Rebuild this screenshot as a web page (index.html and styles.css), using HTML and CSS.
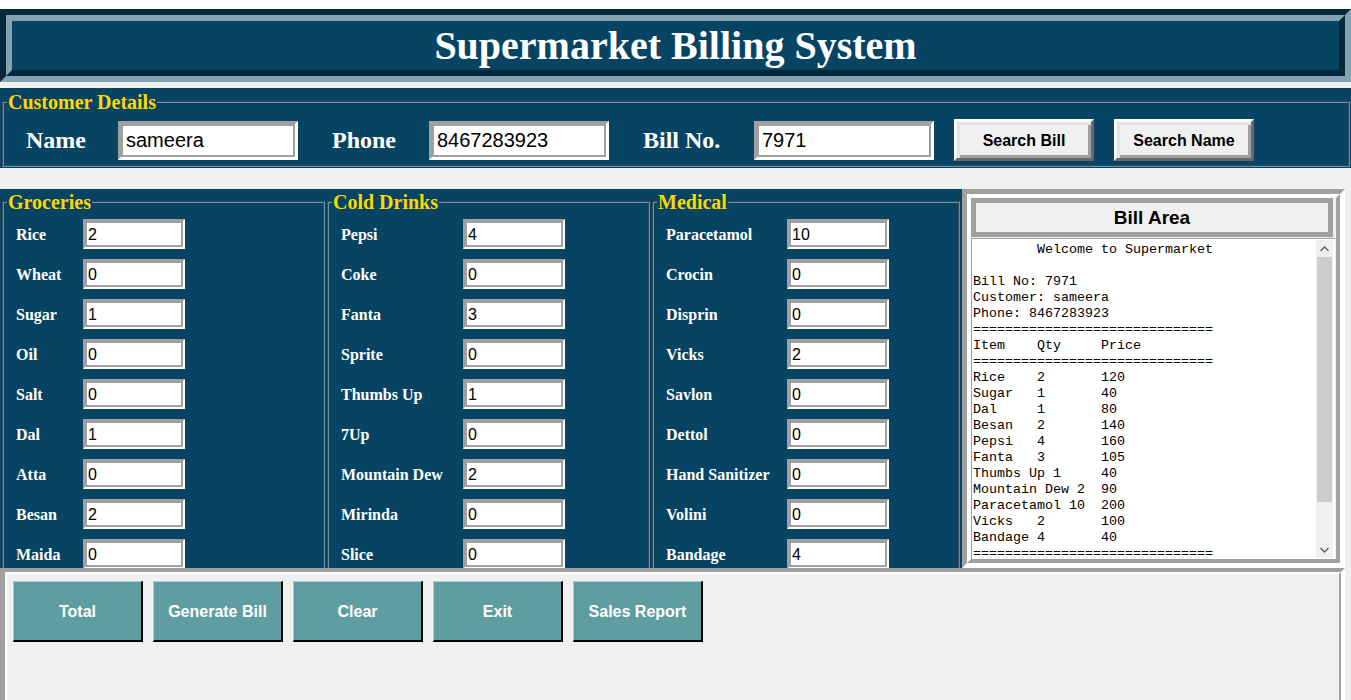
FILE: index.html
```html
<!DOCTYPE html>
<html>
<head>
<meta charset="utf-8">
<title>Supermarket Billing System</title>
<link rel="stylesheet" href="styles.css">
</head>
<body>
<div class="topstrip"></div>
<header class="title">
  <div class="title-inner"><h1>Supermarket Billing System</h1></div>
</header>

<section class="cust">
  <fieldset class="group cust-group">
    <legend>Customer Details</legend>
    <div class="cust-row">
      <span class="clabel w-name">Name</span>
      <span class="centry"><input type="text" value="sameera"></span>
      <span class="clabel w-phone">Phone</span>
      <span class="centry"><input type="text" value="8467283923"></span>
      <span class="clabel w-bill">Bill No.</span>
      <span class="centry"><input type="text" value="7971"></span>
      <button class="sbtn">Search Bill</button>
      <button class="sbtn">Search Name</button>
    </div>
  </fieldset>
</section>

<section class="products">
  <div class="prod-area">
    <fieldset class="group pgroup g1">
      <legend>Groceries</legend>
      <div class="rows">
        <div class="row"><span class="plabel">Rice</span><span class="pentry"><input value="2"></span></div>
        <div class="row"><span class="plabel">Wheat</span><span class="pentry"><input value="0"></span></div>
        <div class="row"><span class="plabel">Sugar</span><span class="pentry"><input value="1"></span></div>
        <div class="row"><span class="plabel">Oil</span><span class="pentry"><input value="0"></span></div>
        <div class="row"><span class="plabel">Salt</span><span class="pentry"><input value="0"></span></div>
        <div class="row"><span class="plabel">Dal</span><span class="pentry"><input value="1"></span></div>
        <div class="row"><span class="plabel">Atta</span><span class="pentry"><input value="0"></span></div>
        <div class="row"><span class="plabel">Besan</span><span class="pentry"><input value="2"></span></div>
        <div class="row"><span class="plabel">Maida</span><span class="pentry"><input value="0"></span></div>
      </div>
    </fieldset>
    <fieldset class="group pgroup g2">
      <legend>Cold Drinks</legend>
      <div class="rows">
        <div class="row"><span class="plabel">Pepsi</span><span class="pentry"><input value="4"></span></div>
        <div class="row"><span class="plabel">Coke</span><span class="pentry"><input value="0"></span></div>
        <div class="row"><span class="plabel">Fanta</span><span class="pentry"><input value="3"></span></div>
        <div class="row"><span class="plabel">Sprite</span><span class="pentry"><input value="0"></span></div>
        <div class="row"><span class="plabel">Thumbs Up</span><span class="pentry"><input value="1"></span></div>
        <div class="row"><span class="plabel">7Up</span><span class="pentry"><input value="0"></span></div>
        <div class="row"><span class="plabel">Mountain Dew</span><span class="pentry"><input value="2"></span></div>
        <div class="row"><span class="plabel">Mirinda</span><span class="pentry"><input value="0"></span></div>
        <div class="row"><span class="plabel">Slice</span><span class="pentry"><input value="0"></span></div>
      </div>
    </fieldset>
    <fieldset class="group pgroup g3">
      <legend>Medical</legend>
      <div class="rows">
        <div class="row"><span class="plabel">Paracetamol</span><span class="pentry"><input value="10"></span></div>
        <div class="row"><span class="plabel">Crocin</span><span class="pentry"><input value="0"></span></div>
        <div class="row"><span class="plabel">Disprin</span><span class="pentry"><input value="0"></span></div>
        <div class="row"><span class="plabel">Vicks</span><span class="pentry"><input value="2"></span></div>
        <div class="row"><span class="plabel">Savlon</span><span class="pentry"><input value="0"></span></div>
        <div class="row"><span class="plabel">Dettol</span><span class="pentry"><input value="0"></span></div>
        <div class="row"><span class="plabel">Hand Sanitizer</span><span class="pentry"><input value="0"></span></div>
        <div class="row"><span class="plabel">Volini</span><span class="pentry"><input value="0"></span></div>
        <div class="row"><span class="plabel">Bandage</span><span class="pentry"><input value="4"></span></div>
      </div>
    </fieldset>
  </div>

  <div class="bill">
    <div class="bill-inner">
      <div class="bill-title">Bill Area</div>
      <div class="bill-text">
<pre class="bill-pre">        Welcome to Supermarket

Bill No: 7971
Customer: sameera
Phone: 8467283923
==============================
Item    Qty     Price
==============================
Rice    2       120
Sugar   1       40
Dal     1       80
Besan   2       140
Pepsi   4       160
Fanta   3       105
Thumbs Up 1     40
Mountain Dew 2  90
Paracetamol 10  200
Vicks   2       100
Bandage 4       40
==============================</pre>
        <div class="scrollbar">
          <div class="sb-arrow"><svg width="9" height="6" viewBox="0 0 9 6"><path d="M0.5 5 L4.5 1 L8.5 5" fill="none" stroke="#606060" stroke-width="1.3"/></svg></div>
          <div class="sb-track"><div class="sb-thumb"></div></div>
          <div class="sb-arrow"><svg width="9" height="6" viewBox="0 0 9 6"><path d="M0.5 1 L4.5 5 L8.5 1" fill="none" stroke="#606060" stroke-width="1.3"/></svg></div>
        </div>
      </div>
    </div>
  </div>
</section>

<section class="actions">
  <div class="actions-inner">
    <button class="abtn">Total</button>
    <button class="abtn">Generate Bill</button>
    <button class="abtn">Clear</button>
    <button class="abtn">Exit</button>
    <button class="abtn">Sales Report</button>
  </div>
</section>
</body>
</html>
```

FILE: styles.css
```css
* { box-sizing: border-box; }

html, body {
  margin: 0;
  padding: 0;
}

body {
  width: 1351px;
  height: 700px;
  overflow: hidden;
  background: #f0f0f0;
  font-family: "Liberation Sans", Arial, sans-serif;
}

.topstrip {
  height: 9px;
  background: #ffffff;
}

/* Title */
.title {
  height: 73px;
  border: 6px solid;
  border-color: #04293b #83a1b1 #83a1b1 #04293b;
}

.title-inner {
  height: 100%;
  border: 6px solid;
  border-color: #83a1b1 #04293b #04293b #83a1b1;
  background: #074463;
  display: flex;
  align-items: center;
  justify-content: center;
}

.title-inner h1 {
  margin: 0;
  font-family: "Liberation Serif", "Times New Roman", serif;
  font-weight: bold;
  font-size: 40px;
  line-height: 48px;
  color: #ffffff;
}

/* Group boxes */
.group {
  margin: 0;
  border: 2px groove #6f93a6;
}

.group legend {
  padding: 0 1px;
  font-family: "Liberation Serif", "Times New Roman", serif;
  font-weight: bold;
  font-size: 20px;
  line-height: 22px;
  color: #ffd700;
}

/* Customer details */
.cust {
  margin-top: 6px;
  height: 80px;
  background: #074463;
  padding: 3px 1px 0 2px;
}

.cust-group {
  padding: 6px 0 4px 3px;
}

.cust-row {
  display: flex;
  align-items: center;
  height: 42px;
  padding-left: 19px;
}

.clabel {
  font-family: "Liberation Serif", "Times New Roman", serif;
  font-weight: bold;
  font-size: 24px;
  color: #ffffff;
  flex: none;
}

.w-name { width: 92px; }
.w-phone { width: 97px; margin-left: 34px; }
.w-bill { width: 111px; margin-left: 34px; }

.centry {
  display: block;
  flex: none;
  width: 180px;
  height: 39px;
  border: 3px solid;
  border-color: #a0a0a0 #ffffff #ffffff #a0a0a0;
}

.centry input {
  display: block;
  width: 100%;
  height: 100%;
  margin: 0;
  border: 2px solid #a0a0a0;
  padding: 1px 0 0 3px;
  background: #ffffff;
  font-family: "Liberation Sans", Arial, sans-serif;
  font-size: 20px;
  color: #000000;
  outline: none;
}

.sbtn {
  flex: none;
  width: 140px;
  height: 42px;
  margin-left: 20px;
  padding: 1px 0 0 0;
  border: 3px solid;
  border-color: #ffffff #696969 #696969 #ffffff;
  box-shadow: inset 3px 3px 0 #e3e3e3, inset -3px -3px 0 #a0a0a0;
  background: #f0f0f0;
  font-family: "Liberation Sans", Arial, sans-serif;
  font-weight: bold;
  font-size: 16px;
  color: #000000;
}

/* Products */
.products {
  margin-top: 21px;
  height: 379px;
  display: flex;
  width: 1345px;
}

.prod-area {
  width: 962px;
  height: 379px;
  overflow: hidden;
  background: #074463;
  display: flex;
  gap: 2px;
  padding: 2px 0 0 2px;
}

.pgroup {
  flex: none;
  height: 420px;
  padding: 1px 0 0 3px;
}

.g1 { width: 323px; }
.g2 { width: 323px; }
.g3 { width: 308px; }

.rows {
  padding-left: 9px;
}

.row {
  display: flex;
  align-items: center;
  height: 40px;
}

.plabel {
  flex: none;
  padding-top: 1px;
  font-family: "Liberation Serif", "Times New Roman", serif;
  font-weight: bold;
  font-size: 16px;
  color: #ffffff;
  white-space: nowrap;
}

.g1 .plabel { width: 67px; }
.g2 .plabel { width: 122px; }
.g3 .plabel { width: 121px; }

.pentry {
  display: block;
  flex: none;
  width: 102px;
  height: 30px;
  border: 2px solid;
  border-color: #a0a0a0 #ffffff #ffffff #a0a0a0;
}

.pentry input {
  display: block;
  width: 100%;
  height: 100%;
  margin: 0;
  border: 2px solid #a0a0a0;
  padding: 1px 0 0 1px;
  background: #ffffff;
  font-family: "Liberation Sans", Arial, sans-serif;
  font-size: 16px;
  color: #000000;
  outline: none;
}

/* Bill area */
.bill {
  width: 383px;
  height: 379px;
  border: 5px solid;
  border-color: #a0a0a0 #ffffff #ffffff #a0a0a0;
  background: #f0f0f0;
}

.bill-inner {
  height: 100%;
  border: 4px solid;
  border-color: #ffffff #a0a0a0 #a0a0a0 #ffffff;
  padding: 0 1px 0 0;
  display: flex;
  flex-direction: column;
}

.bill-title {
  height: 39px;
  margin: 0 2px 0 0;
  border: 5px solid #a0a0a0;
  background: #f0f0f0;
  text-align: center;
  font-family: "Liberation Sans", Arial, sans-serif;
  font-weight: bold;
  font-size: 19px;
  line-height: 29px;
  color: #000000;
}

.bill-text {
  flex: 1;
  margin-top: 1px;
  display: flex;
  background: #ffffff;
  border-top: 1px solid #a0a0a0;
  border-left: 1px solid #a0a0a0;
  overflow: hidden;
}

.bill-pre {
  flex: 1;
  margin: 0;
  padding: 3px 0 0 1px;
  font-family: "Liberation Mono", "Courier New", monospace;
  font-size: 13.33px;
  line-height: 16px;
  color: #000000;
  overflow: hidden;
}

.scrollbar {
  width: 17px;
  margin: 1px 2px 1px 0;
  display: flex;
  flex-direction: column;
  background: #f0f0f0;
}

.sb-arrow {
  height: 17px;
  display: flex;
  align-items: center;
  justify-content: center;
}

.sb-track {
  flex: 1;
}

.sb-thumb {
  height: 245px;
  margin: 0 1px;
  background: #cdcdcd;
}

/* Bottom actions */
.actions {
  width: 1345px;
  height: 150px;
  border: 4px solid;
  border-color: #a0a0a0 #ffffff #ffffff #a0a0a0;
  border-left-width: 5px;
}

.actions-inner {
  height: 100%;
  border: 2px solid;
  border-color: #ffffff #a0a0a0 #a0a0a0 #ffffff;
  display: flex;
  align-items: flex-start;
  gap: 10px;
  padding: 7px 0 0 6px;
}

.abtn {
  width: 130px;
  height: 61px;
  padding: 1px 0 0 0;
  border: 2px solid;
  border-color: #a8d0d2 #000000 #000000 #a8d0d2;
  border-top-width: 1px;
  border-left-width: 1px;
  background: #5f9ea0;
  font-family: "Liberation Sans", Arial, sans-serif;
  font-weight: bold;
  font-size: 16px;
  color: #ffffff;
}
```
